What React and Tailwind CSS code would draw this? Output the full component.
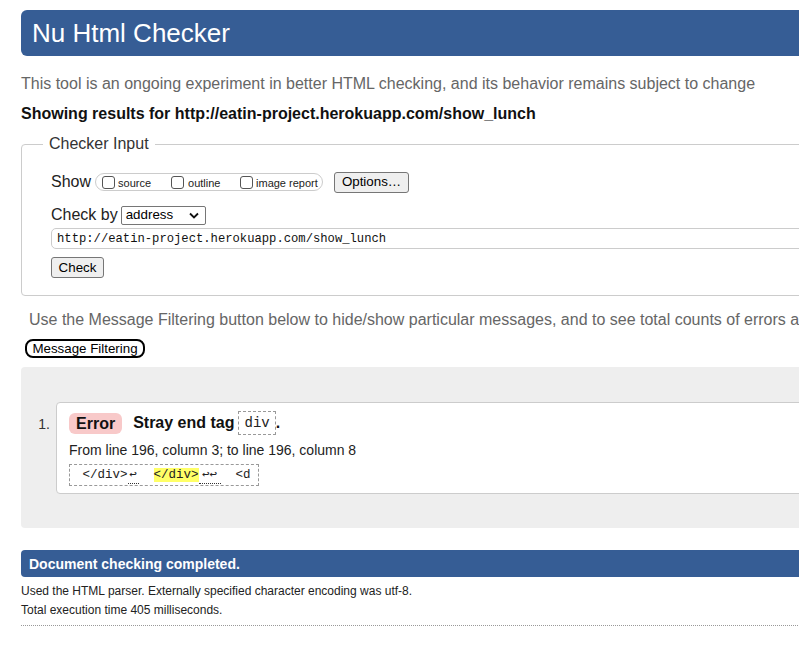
import React from "react";

function Box() {
  return <span className="inline-block w-[13px] h-[13px] border border-[#555] rounded-[3px] bg-white shrink-0" />;
}

export default function App() {
  const sans = { fontFamily: '"Liberation Sans", Arial, sans-serif' };
  const mono = { fontFamily: '"Liberation Mono", "DejaVu Sans Mono", monospace' };
  return (
    <div className="w-[799px] h-[659px] overflow-hidden bg-white text-[#222]" style={sans}>
      <div className="w-[1200px] pl-[21px]">
        {/* header */}
        <div className="mt-[10px] h-[46px] bg-[#365d95] rounded-[6px] flex items-center pl-[11px]">
          <h1 className="text-white text-[26px] leading-[30px] font-normal">Nu Html Checker</h1>
        </div>

        <p className="mt-[19px] text-[16px] leading-[18px] text-[#666]">
          This tool is an ongoing experiment in better HTML checking, and its behavior remains subject to change
        </p>
        <p className="mt-[12px] text-[16px] leading-[18px] font-bold text-[#111]">
          Showing results for http://eatin-project.herokuapp.com/show_lunch
        </p>

        {/* Checker input */}
        <div className="relative mt-[21px] border border-[#ccc] rounded-[4px] pl-[29px] pt-[27px] pb-[17px]">
          <span className="absolute top-[-11px] left-[21px] bg-white px-[6px] text-[16px] leading-[20px] text-[#333]">
            Checker Input
          </span>
          <div className="flex items-center h-[20px]">
            <span className="text-[16px] leading-[20px] text-[#222]">Show</span>
            <div className="ml-[4px] h-[18px] w-[228px] border border-[#ccc] rounded-[9px] flex items-center pl-[6px]">
              <span className="w-[69px] flex items-center gap-[3px] text-[11px] leading-[13px] text-[#222]">
                <Box />
                <span className="mt-[3px]">source</span>
              </span>
              <span className="w-[69px] flex items-center gap-[4px] text-[11px] leading-[13px] text-[#222]">
                <Box />
                <span className="mt-[3px]">outline</span>
              </span>
              <span className="flex items-center gap-[3px] text-[11px] leading-[13px] text-[#222]">
                <Box />
                <span className="mt-[3px]">image report</span>
              </span>
            </div>
            <button className="ml-[11px] h-[21px] w-[75px] bg-[#efefef] border border-[#767676] rounded-[3px] text-[13.333px] leading-[16px] text-black">
              Options…
            </button>
          </div>

          <div className="flex items-center h-[20px] mt-[13px]">
            <span className="text-[16px] leading-[20px] text-[#222]">Check by</span>
            <div className="ml-[3px] h-[19px] w-[85px] border border-[#767676] rounded-[2px] flex items-center justify-between pl-[4px] pr-[6px] bg-white">
              <span className="text-[13.333px] leading-[16px] text-black">address</span>
              <svg width="10" height="7" viewBox="0 0 10 7">
                <path d="M1 1.5 L5 5.5 L9 1.5" fill="none" stroke="#111" strokeWidth="1.8" />
              </svg>
            </div>
          </div>

          <div className="mt-[3px] h-[21px] border border-[#ccc] rounded-[5px] flex items-center pl-[5px] bg-white">
            <span className="text-[12.2px] leading-[14px] text-[#111]" style={mono}>
              http://eatin-project.herokuapp.com/show_lunch
            </span>
          </div>

          <button className="mt-[8px] h-[21px] w-[53px] bg-[#efefef] border border-[#767676] rounded-[3px] text-[13.333px] leading-[16px] text-black block">
            Check
          </button>
        </div>

        <p className="mt-[15px] pl-[8px] text-[16px] leading-[18px] text-[#666] whitespace-nowrap">
          Use the Message Filtering button below to hide/show particular messages, and to see total counts of errors and warnings.
        </p>
        <button className="mt-[10px] ml-[4px] h-[19px] w-[120px] border-2 border-black rounded-[8px] bg-white text-[13.333px] leading-[14px] text-black block">
          Message Filtering
        </button>

        {/* results */}
        <div className="mt-[9px] h-[161px] bg-[#eeeeee] rounded-[4px] pt-[35px] flex">
          <span className="w-[35px] text-right pr-[6px] pt-[14px] text-[14px] leading-[16px] text-[#333]">1.</span>
          <div className="flex-1 h-[92px] bg-white border border-[#ccc] rounded-[4px] pl-[12px] pt-[8px]">
            <div className="flex items-center h-[24px]">
              <span className="h-[21px] px-[7px] bg-[#f8c9c9] rounded-[6px] text-[16px] leading-[21px] font-bold text-[#111]">
                Error
              </span>
              <span className="ml-[11px] text-[16px] leading-[20px] font-bold text-[#111]">Stray end tag</span>
              <code
                className="ml-[4px] h-[24px] px-[5px] border border-dashed border-[#999] text-[14px] leading-[22px] text-[#222]"
                style={mono}
              >
                div
              </code>
              <span className="text-[16px] leading-[20px] font-bold text-[#111]">.</span>
            </div>
            <p className="mt-[6px] text-[14px] leading-[18px] text-[#222]">
              From line 196, column 3; to line 196, column 8
            </p>
            <div
              className="mt-[5px] inline-block h-[22px] w-[190px] pl-[5px] border border-dashed border-[#999] text-[12.5px] leading-[20px] text-[#222] whitespace-pre overflow-hidden"
              style={mono}
            >
              {" </div>"}
              <span className="inline-block w-[11px] text-center border-b border-dotted border-[#333] leading-[16px]">↩</span>
              {"  "}
              <mark className="bg-[#ffff66] text-[#222]">{"</div>"}</mark>
              <span className="inline-block w-[22px] text-center border-b border-dotted border-[#333] leading-[16px]">↩↩</span>
              {"  <d"}
            </div>
          </div>
        </div>

        {/* completion */}
        <div className="mt-[22px] h-[27px] bg-[#365d95] rounded-[4px] flex items-center pl-[8px]">
          <span className="text-white text-[14px] leading-[16px] font-bold">Document checking completed.</span>
        </div>
        <p className="mt-[5px] text-[12px] leading-[19px] text-[#222]">
          Used the HTML parser. Externally specified character encoding was utf-8.
        </p>
        <p className="text-[12px] leading-[19px] text-[#222]">Total execution time 405 milliseconds.</p>
        <div className="mt-[5px] border-t border-dotted border-[#999]" />
      </div>
    </div>
  );
}
